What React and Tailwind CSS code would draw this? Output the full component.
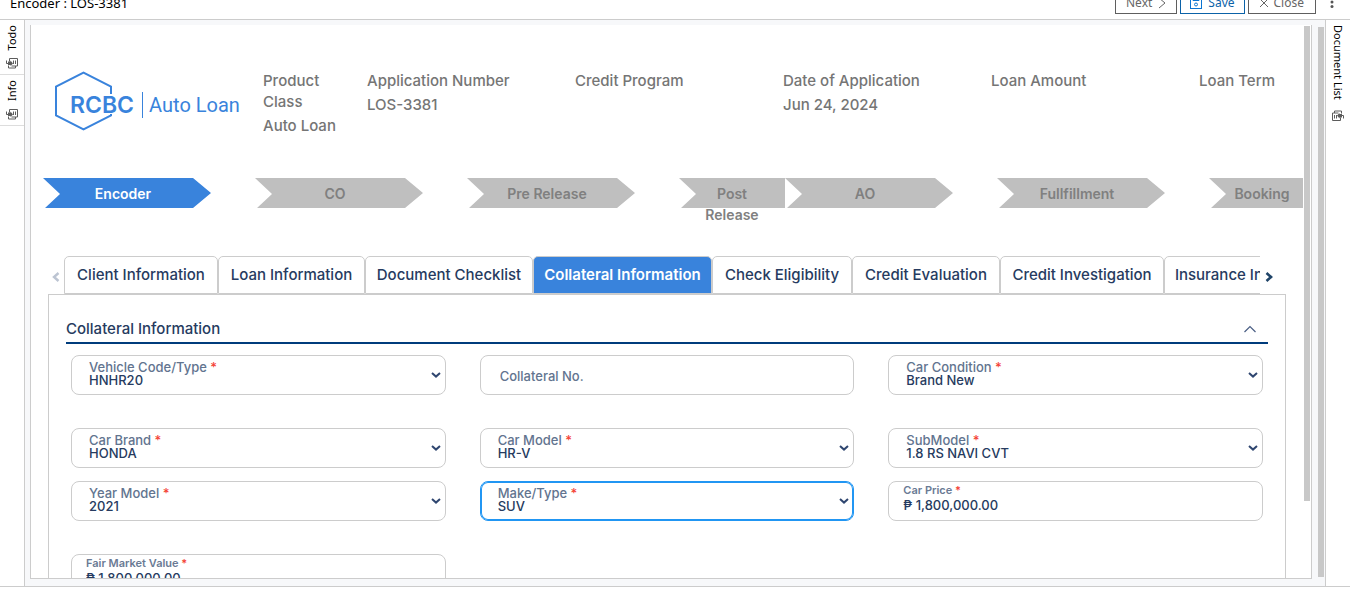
import React from "react";

const facts = [
  { label: "Product Class", value: "Auto Loan", span: "col-span-1" },
  { label: "Application Number", value: "LOS-3381", span: "col-span-2" },
  { label: "Credit Program", value: "", span: "col-span-2" },
  { label: "Date of Application", value: "Jun 24, 2024", span: "col-span-2" },
  { label: "Loan Amount", value: "", span: "col-span-2" },
  { label: "Loan Term", value: "", span: "col-span-1" },
];

const steps = [
  { name: "Encoder", span: "col-span-2", active: true },
  { name: "CO", span: "col-span-2" },
  { name: "Pre Release", span: "col-span-2" },
  { name: "Post Release", span: "col-span-1" },
  { name: "AO", span: "col-span-2" },
  { name: "Fullfillment", span: "col-span-2" },
  { name: "Booking", span: "col-span-1" },
];

const tabs = [
  { name: "Client Information", width: "w-[154px]" },
  { name: "Loan Information", width: "w-[147px]" },
  { name: "Document Checklist", width: "w-[168px]" },
  { name: "Collateral Information", width: "w-[179px]", active: true },
  { name: "Check Eligibility", width: "w-[140px]" },
  { name: "Credit Evaluation", width: "w-[148px]" },
  { name: "Credit Investigation", width: "w-[164px]" },
  { name: "Insurance Information", width: "w-[179px]" },
];

const rows = [
  {
    gap: "mb-[33px]",
    fields: [
      { id: "vehicle", kind: "select", label: "Vehicle Code/Type", value: "HNHR20" },
      { id: "collateral", kind: "empty", label: "Collateral No." },
      { id: "condition", kind: "select", label: "Car Condition", value: "Brand New" },
    ],
  },
  {
    gap: "mb-[13px]",
    fields: [
      { id: "brand", kind: "select", label: "Car Brand", value: "HONDA" },
      { id: "model", kind: "select", label: "Car Model", value: "HR-V" },
      { id: "submodel", kind: "select", label: "SubModel", value: "1.8 RS NAVI CVT" },
    ],
  },
  {
    gap: "mb-[33px]",
    fields: [
      { id: "year", kind: "select", label: "Year Model", value: "2021" },
      { id: "make", kind: "select", label: "Make/Type", value: "SUV", focused: true },
      { id: "price", kind: "text", label: "Car Price", value: "₱ 1,800,000.00" },
    ],
  },
  {
    gap: "mb-[33px]",
    fields: [{ id: "market", kind: "text", label: "Fair Market Value", value: "₱ 1,800,000.00" }],
  },
];

function PanelIcon({ className = "" }) {
  return (
    <svg viewBox="0 0 12 11" className={`h-[11px] w-3 shrink-0 ${className}`} fill="none" stroke="#5c5c5c" aria-hidden="true">
      <path d="M3.500 3.500V.5h8v7.500H5.500" />
      <path d="M2.500 7.500v2.500h7V8" />
      <path d="M7.500 2.500v3.500M9.500 2.500v3.500" />
      <path d="M.5 2.500v3h2" />
      <path d="M2 3.500h2.500v-1L7 5.500 4.500 8V7H2z" fill="#5c5c5c" stroke="none" />
    </svg>
  );
}

function Logo() {
  return (
    <div className="relative h-[60px] w-[190px]">
      <svg viewBox="0 0 60 60" className="h-[60px] w-[60px]" fill="none" stroke="#3983dc" strokeWidth="2" aria-hidden="true">
        <path d="M57 23V15.500L29.500 1.500L2 15.500V44.500L29.500 58.500L57 44.500V43" />
      </svg>
      <div className="absolute left-4 top-[21px] flex items-center text-[#3983dc]">
        <span className="text-[23px] leading-[24px] font-semibold">RCBC</span>
        <span className="ml-2 mr-1.5 h-[26px] w-px bg-[#3983dc]" />
        <span className="font-['Roboto',sans-serif] text-[20px] leading-[24px] whitespace-nowrap">Auto Loan</span>
      </div>
    </div>
  );
}

function Step({ name, span, active }) {
  return (
    <li className={`${span} grid min-w-0`}>
      <div className="col-start-1 row-start-1 overflow-hidden">
        <div
          className={`h-[30px] w-[168px] [clip-path:polygon(0_0,150px_0,100%_50%,150px_100%,2px_100%,17px_53%)] ${
            active ? "bg-[#3983dc]" : "bg-[#bfbfbf]"
          }`}
        />
      </div>
      <span
        className={`z-10 col-start-1 row-start-1 h-[30px] max-w-40 px-5 pt-[5px] text-center text-[14px] leading-[21px] font-semibold ${
          active ? "text-white" : "text-[#808080]"
        }`}
      >
        {name}
      </span>
    </li>
  );
}

function Star() {
  return <span className="text-[#f44336]"> *</span>;
}

function Field({ id, kind, label, value, focused }) {
  const frame = focused ? "border-[#2196f3] ring-1 ring-inset ring-[#2196f3]" : "border-[#ccc]";
  const stack = "col-start-1 row-start-1";
  return (
    <div className={`grid h-10 rounded-lg border bg-white ${frame}`}>
      {kind === "select" && (
        <>
          <label htmlFor={id} className={`${stack} z-10 self-start pt-[5px] pl-[17px] text-[13px] leading-[13px] font-medium text-[#62748f]`}>
            {label}
            <Star />
          </label>
          <select
            id={id}
            defaultValue={value}
            className={`${stack} appearance-none bg-transparent pt-[11px] pr-6 pl-[17px] text-[13px] font-medium text-[#263b60] outline-none`}
          >
            <option>{value}</option>
          </select>
          <svg viewBox="0 0 10 6" className={`${stack} pointer-events-none mr-1 h-1.5 w-2.5 self-center justify-self-end`} fill="none" stroke="#2f4670" strokeWidth="2" aria-hidden="true">
            <path d="M1 1l4 3.600L9 1" />
          </svg>
        </>
      )}
      {kind === "empty" && (
        <input
          id={id}
          aria-label={label}
          placeholder={label}
          className={`${stack} min-w-0 bg-transparent pt-1 pl-[19px] text-[13px] font-medium text-[#263b60] outline-none placeholder:text-[#62748f]`}
        />
      )}
      {kind === "text" && (
        <>
          <label htmlFor={id} className={`${stack} z-10 self-start pt-[2px] pl-3.5 text-[11px] leading-[13px] font-semibold text-[#6a7a94]`}>
            {label}
            <Star />
          </label>
          <input
            id={id}
            defaultValue={value}
            className={`${stack} min-w-0 bg-transparent pt-[10px] pl-3.5 text-[13px] font-medium text-[#263b60] outline-none`}
          />
        </>
      )}
    </div>
  );
}

function Header() {
  const button = "flex h-[22px] items-center gap-1.5 border bg-white text-[12px]";
  return (
    <header className="flex h-5 shrink-0 items-end justify-between overflow-hidden border-b border-[#ccc] pr-1.5 pb-[5px] pl-2.5 font-['Noto_Sans',sans-serif]">
      <h1 className="text-[13px] leading-[22px] text-black">Encoder : LOS-3381</h1>
      <div className="flex items-end gap-[3px]">
        <button className={`${button} border-[#5f5f5f] px-2.5 text-[#666]`}>
          Next
          <svg viewBox="0 0 8 12" className="h-3 w-2" fill="none" stroke="currentColor" aria-hidden="true">
            <path d="M1 1l6 5-6 5" />
          </svg>
        </button>
        <button className={`${button} border-[#0b62a8] px-[9px] text-[#0b62a8]`}>
          <svg viewBox="0 0 12 12" className="h-3 w-3" fill="none" stroke="#0b74d1" aria-hidden="true">
            <rect x=".5" y=".5" width="11" height="11" />
            <path d="M3 1v2.500h6V1" />
            <circle cx="6" cy="7.500" r="1.500" />
          </svg>
          Save
        </button>
        <button className={`${button} border-[#5f5f5f] px-[11px] text-[#666]`}>
          <svg viewBox="0 0 8 8" className="h-2 w-2" fill="none" stroke="currentColor" aria-hidden="true">
            <path d="M0 0l8 8M8 0L0 8" />
          </svg>
          Close
        </button>
        <button aria-label="More" className="flex h-[22px] w-[25px] items-center justify-center">
          <svg viewBox="0 0 4 14" className="h-3.5 w-1" fill="#555" aria-hidden="true">
            <circle cx="2" cy="2" r="1.500" />
            <circle cx="2" cy="6" r="1.500" />
            <circle cx="2" cy="10.500" r="1.500" />
          </svg>
        </button>
      </div>
    </header>
  );
}

export default function App() {
  const side = "text-[11px] leading-[16px] text-black [writing-mode:vertical-rl]";
  return (
    <div className="flex h-screen flex-col overflow-hidden bg-white pb-[15px] font-['Inter','Liberation_Sans',sans-serif]">
      <Header />
      <div className="flex min-h-0 flex-1 border-b border-[#ccc]">
        <nav className="flex w-[25px] shrink-0 flex-col border-r border-[#ccc] font-['Noto_Sans',sans-serif]">
          {["Todo", "Info"].map((name) => (
            <button key={name} className="flex flex-col items-center gap-2 border-b border-[#ddd] pt-[5px] pb-[5px]">
              <span className={`${side} rotate-180`}>{name}</span>
              <PanelIcon />
            </button>
          ))}
        </nav>

        <div className="flex min-w-0 flex-1 bg-[#f7f8fa] pt-[5px] pr-px pb-[7px] pl-[5px]">
          <main className="flex min-w-0 flex-1 overflow-hidden border-r border-b border-l border-[#ccc] bg-white">
            <div className="min-w-0 flex-1 overflow-hidden">
              <section className="grid grid-cols-12 pt-[45px] pr-2 pl-4">
                <div className="col-span-2 pt-px pl-[7px]">
                  <Logo />
                </div>
                {facts.map((f) => (
                  <dl key={f.label} className={`${f.span} px-2 text-[15px] leading-[21px] font-medium text-[#757575]`}>
                    <dt className="mb-[3px]">{f.label}</dt>
                    <dd className="whitespace-nowrap">{f.value}</dd>
                  </dl>
                ))}
              </section>

              <ol className="mt-[42px] ml-3 grid w-full grid-cols-12">
                {steps.map((s) => (
                  <Step key={s.name} {...s} />
                ))}
              </ol>

              <div className="mt-12 flex items-center pr-[22px] pl-[17px]">
                <button aria-label="Previous tabs" className="flex w-4 shrink-0 justify-center pt-[3px]">
                  <svg viewBox="0 0 8 10" className="h-2.5 w-2" fill="none" stroke="#bcc4d2" strokeWidth="2.400" aria-hidden="true">
                    <path d="M6.500 1L2 5l4.500 4" />
                  </svg>
                </button>
                <div role="tablist" className="flex min-w-0 flex-1 overflow-hidden">
                  {tabs.map((t) => (
                    <button
                      key={t.name}
                      role="tab"
                      aria-selected={Boolean(t.active)}
                      className={`${t.width} flex h-[38px] shrink-0 items-center justify-center rounded-t-[5px] border border-[#ccc] text-[15px] whitespace-nowrap ${
                        t.active ? "bg-[#3983dc] font-semibold text-white" : "bg-white font-medium text-[#263b60]"
                      }`}
                    >
                      {t.name}
                    </button>
                  ))}
                </div>
                <button aria-label="Next tabs" className="flex w-[21px] shrink-0 justify-start pt-[3px] pl-[5px]">
                  <svg viewBox="0 0 8 10" className="h-2.5 w-2" fill="none" stroke="#1f4468" strokeWidth="2.600" aria-hidden="true">
                    <path d="M1.500 1L6 5 1.500 9" />
                  </svg>
                </button>
              </div>

              <section className="mr-[17px] ml-[17px] border border-[#ccc] px-[17px] pt-5">
                <div className="flex h-[29px] items-start justify-between border-b-2 border-[#003c7c] pr-3">
                  <h2 className="pt-1 text-[15px] leading-[20px] font-medium text-[#263b60]">Collateral Information</h2>
                  <button aria-label="Collapse section" className="pt-2.5">
                    <svg viewBox="0 0 12 8" className="h-2 w-3" fill="none" stroke="#4a5f85" strokeWidth="1.200" aria-hidden="true">
                      <path d="M.5 7L6 1.500 11.500 7" />
                    </svg>
                  </button>
                </div>
                <form className="px-[5px] pt-[11px]">
                  {rows.map((row) => (
                    <div key={row.fields[0].id} className={`grid grid-cols-3 gap-x-[34px] ${row.gap}`}>
                      {row.fields.map((f) => (
                        <Field key={f.id} {...f} />
                      ))}
                    </div>
                  ))}
                </form>
              </section>
            </div>
            <div className="w-2 shrink-0 px-px pt-px">
              <div className="h-[86%] bg-[#c8c8c8]" />
            </div>
          </main>
          <div className="ml-1.5 w-1.5 shrink-0 pt-0.5 pb-0.5">
            <div className="h-full bg-[#c8c8c8]" />
          </div>
        </div>

        <aside className="w-[25px] shrink-0 border-l border-[#ccc] font-['Noto_Sans',sans-serif]">
          <button className="flex w-full flex-col items-center gap-2.5 pt-[5px]">
            <span className={side}>Document List</span>
            <PanelIcon className="rotate-180" />
          </button>
        </aside>
      </div>
    </div>
  );
}
